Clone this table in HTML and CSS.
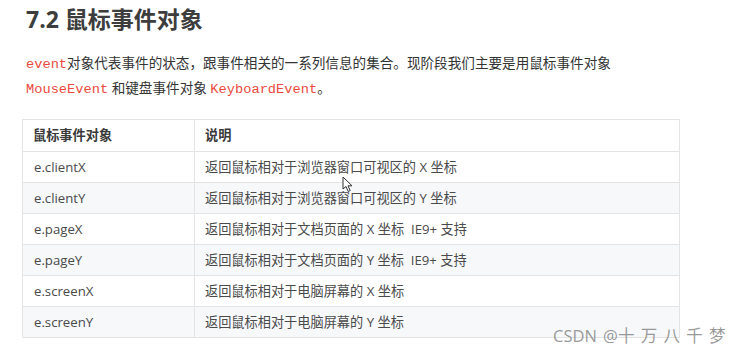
FILE: index.html
```html
<!DOCTYPE html>
<html lang="zh-CN">
<head>
<meta charset="utf-8">
<link rel="stylesheet" href="styles.css">
</head>
<body>
<div class="page">
  <h2 class="title">7.2 鼠标事件对象</h2>
  <p class="intro"><code class="code">event</code>对象代表事件的状态，跟事件相关的一系列信息的集合。现阶段我们主要是用鼠标事件对象<br><code class="code">MouseEvent</code> 和键盘事件对象 <code class="code">KeyboardEvent</code>。</p>
  <table class="tbl">
    <thead>
      <tr><th class="c1">鼠标事件对象</th><th>说明</th></tr>
    </thead>
    <tbody>
      <tr><td>e.clientX</td><td>返回鼠标相对于浏览器窗口可视区的 X 坐标</td></tr>
      <tr class="alt"><td>e.clientY</td><td>返回鼠标相对于浏览器窗口可视区的 Y 坐标</td></tr>
      <tr><td>e.pageX</td><td>返回鼠标相对于文档页面的 X 坐标&nbsp; IE9+ 支持</td></tr>
      <tr class="alt"><td>e.pageY</td><td>返回鼠标相对于文档页面的 Y 坐标&nbsp; IE9+ 支持</td></tr>
      <tr><td>e.screenX</td><td>返回鼠标相对于电脑屏幕的 X 坐标</td></tr>
      <tr class="alt"><td>e.screenY</td><td>返回鼠标相对于电脑屏幕的 Y 坐标</td></tr>
    </tbody>
  </table>
  <svg class="cursor" width="12" height="17" viewBox="0 0 12 17">
    <path d="M1 1 L1 13 L4 10.5 L6.2 15.5 L8.2 14.6 L6 9.8 L10 9.8 Z" fill="#fff" stroke="#333" stroke-width="1" stroke-linejoin="round"/>
  </svg>
  <div class="watermark">CSDN @十 万 八 千 梦</div>
</div>
</body>
</html>
```
FILE: styles.css
```css
html, body {
  margin: 0;
  padding: 0;
  background: #fff;
}
.page {
  position: relative;
  width: 744px;
  height: 355px;
  padding: 4px 0 0 22px;
  box-sizing: border-box;
  font-family: "Open Sans", "Noto Sans CJK SC", sans-serif;
  color: #333;
  overflow: hidden;
}
.title {
  margin: 0 0 0 4px;
  font-size: 23px;
  line-height: 30px;
  font-weight: 700;
  color: #3d3d3d;
}
.intro {
  margin: 16px 0 0 4px;
  font-size: 13.6px;
  line-height: 25px;
  color: #333;
}
.code {
  font-family: "Liberation Mono", "DejaVu Sans Mono", monospace;
  font-size: 13.7px;
  line-height: 14px;
  color: #ea4a3d;
}
.tbl {
  margin-top: 19px;
  width: 658px;
  border-collapse: collapse;
  font-size: 13.2px;
  color: #4a4a4a;
}
.tbl th, .tbl td {
  border: 1px solid #e2e4e6;
  text-align: left;
  padding: 0 10px;
  line-height: 30px;
  font-weight: 400;
}
.tbl th {
  font-weight: 700;
  line-height: 31px;
  color: #3a3a3a;
}
.tbl .c1 {
  width: 151px;
}
.tbl td:first-child {
  padding-left: 11px;
}
.tbl tr.alt td {
  background: #f6f8fa;
}
.cursor {
  position: absolute;
  left: 342px;
  top: 176px;
}
.watermark {
  position: absolute;
  left: 553px;
  top: 325px;
  font-size: 16.5px;
  line-height: 22px;
  word-spacing: 2px;
  color: rgba(120, 120, 120, 0.75);
  white-space: nowrap;
}
```
